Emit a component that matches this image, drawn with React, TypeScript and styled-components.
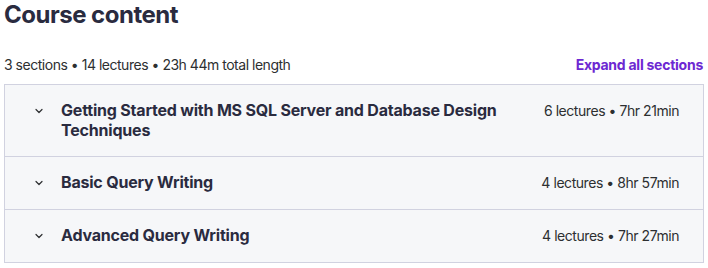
import styled, { createGlobalStyle } from "styled-components";

const GlobalStyle = createGlobalStyle`
  body {
    margin: 0;
    background: #ffffff;
    font-family: Inter, "Noto Sans", sans-serif;
    color: #2d2f3a;
  }
`;

const Page = styled.div`
  width: 700px;
  padding: 0 4px;
`;

const Title = styled.h2`
  margin: 0;
  font-size: 24px;
  line-height: 30px;
  font-weight: 700;
  letter-spacing: -0.5px;
  color: #2a2b3f;
`;

const SummaryBar = styled.div`
  display: flex;
  justify-content: space-between;
  align-items: center;
  margin-top: 24px;
  height: 20px;
  margin-bottom: 10px;
`;

const Summary = styled.span`
  font-size: 14px;
  color: #2d2f31;
  letter-spacing: -0.48px;
`;

const ExpandButton = styled.button`
  border: none;
  background: none;
  padding: 0 1px 0 0;
  font-family: inherit;
  font-size: 14px;
  font-weight: 700;
  color: #6d28d2;
  letter-spacing: -0.25px;
  cursor: pointer;
`;

const SectionList = styled.div`
  border: 1px solid #d1d2e0;
`;

const Section = styled.div<{ last?: boolean }>`
  display: flex;
  align-items: flex-start;
  padding: 16px 24px 16px 28px;
  background: #f6f7f9;
  border-bottom: ${(p) => (p.last ? "none" : "1px solid #d1d2e0")};
`;

const Chevron = styled.span`
  display: flex;
  align-items: center;
  width: 12px;
  height: 20px;
  margin-right: 16px;
  color: #2d2f31;
`;

const SectionTitle = styled.span`
  flex: 1;
  font-size: 16px;
  line-height: 19.5px;
  font-weight: 700;
  color: #2a2b3f;
  letter-spacing: -0.2px;
  padding-right: 24px;
`;

const SectionMeta = styled.span`
  font-size: 14px;
  line-height: 20px;
  color: #2d2f31;
  white-space: nowrap;
  letter-spacing: -0.45px;
`;

const sections = [
  {
    title: "Getting Started with MS SQL Server and Database Design Techniques",
    meta: "6 lectures • 7hr 21min",
  },
  { title: "Basic Query Writing", meta: "4 lectures • 8hr 57min" },
  { title: "Advanced Query Writing", meta: "4 lectures • 7hr 27min" },
];

function ChevronDown() {
  return (
    <svg width="12" height="12" viewBox="0 0 12 12" fill="none">
      <path
        d="M3 4.5 6 7.5 9 4.5"
        stroke="currentColor"
        strokeWidth="1.2"
        strokeLinecap="round"
        strokeLinejoin="round"
      />
    </svg>
  );
}

function App() {
  return (
    <Page>
      <GlobalStyle />
      <Title>Course content</Title>
      <SummaryBar>
        <Summary>3 sections • 14 lectures • 23h 44m total length</Summary>
        <ExpandButton>Expand all sections</ExpandButton>
      </SummaryBar>
      <SectionList>
        {sections.map((section, i) => (
          <Section key={section.title} last={i === sections.length - 1}>
            <Chevron>
              <ChevronDown />
            </Chevron>
            <SectionTitle>{section.title}</SectionTitle>
            <SectionMeta>{section.meta}</SectionMeta>
          </Section>
        ))}
      </SectionList>
    </Page>
  );
}

export default App;
